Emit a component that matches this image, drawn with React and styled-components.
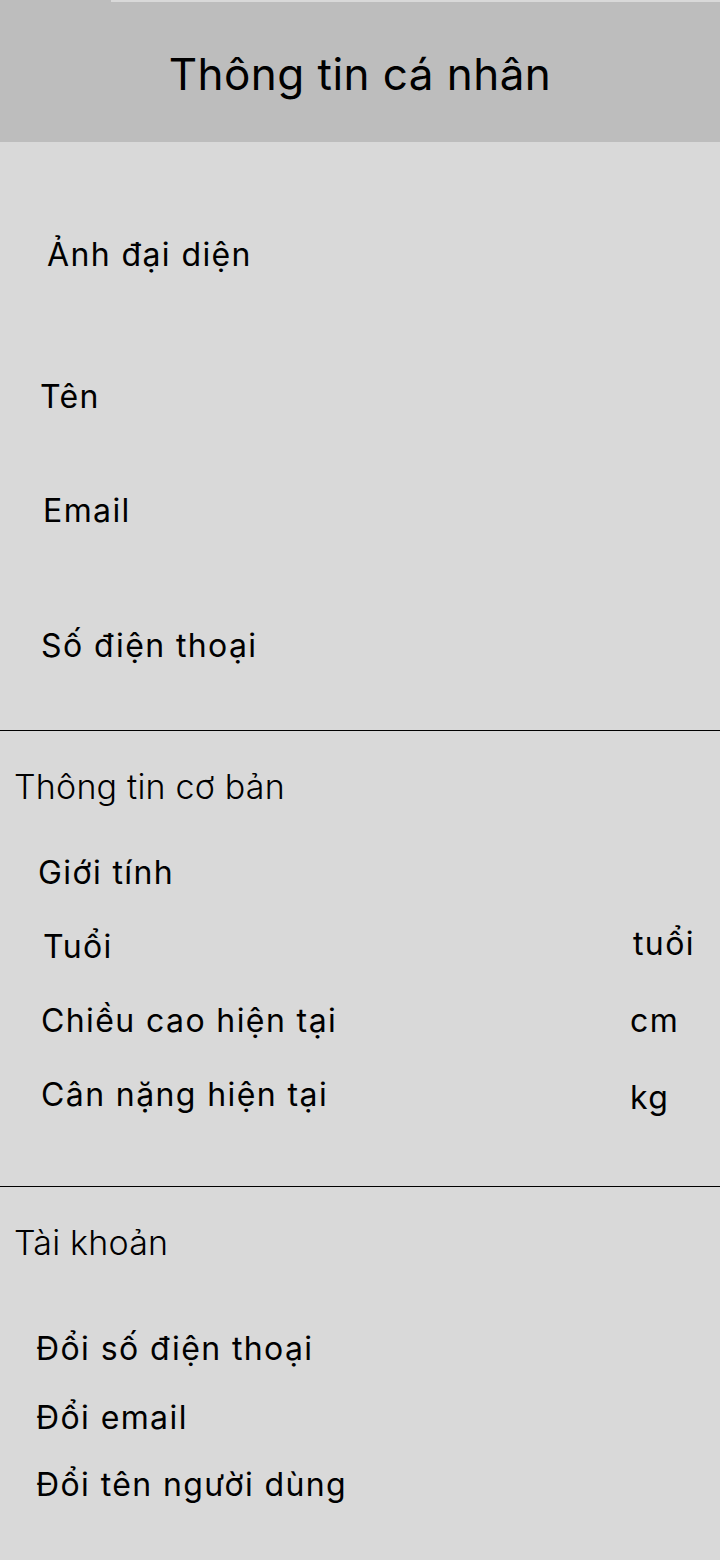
import React from 'react';
import styled, { createGlobalStyle } from 'styled-components';

const GlobalStyle = createGlobalStyle`
  html, body {
    margin: 0;
    padding: 0;
    background: #d9d9d9;
  }
  body {
    font-family: Inter, "Noto Sans", sans-serif;
    color: #000;
  }
`;

const basicInfo = [
  { label: 'Giới tính', indent: 38, top: 46 },
  { label: 'Tuổi', indent: 43, top: 34, unit: 'tuổi', unitShift: 3, unitDy: -3 },
  { label: 'Chiều cao hiện tại', indent: 41, top: 34, unit: 'cm' },
  { label: 'Cân nặng hiện tại', indent: 41, top: 34, unit: 'kg', unitDy: 3 }
];

const accountItems = [
  { label: 'Đổi số điện thoại', top: 66 },
  { label: 'Đổi email', top: 29 },
  { label: 'Đổi tên người dùng', top: 27 }
];

export default function App() {
  return (
    <Page>
      <GlobalStyle />
      <Header>
        <TopStrip />
        <Title>Thông tin cá nhân</Title>
      </Header>

      <Section $bottom={64}>
        <Row $indent={47} $top={93}>Ảnh đại diện</Row>
        <Row $indent={40} $top={102}>Tên</Row>
        <Row $indent={43} $top={74}>Email</Row>
        <Row $indent={41} $top={95}>Số điện thoại</Row>
      </Section>

      <Section $bordered $bottom={68}>
        <SectionTitle>Thông tin cơ bản</SectionTitle>
        {basicInfo.map(item => (
          <FieldRow key={item.label} $top={item.top}>
            <Label $indent={item.indent}>{item.label}</Label>
            {item.unit && (
              <Unit $shift={item.unitShift || 0} $dy={item.unitDy || 0}>
                {item.unit}
              </Unit>
            )}
          </FieldRow>
        ))}
      </Section>

      <Section $bordered $bottom={40}>
        <SectionTitle>Tài khoản</SectionTitle>
        {accountItems.map(item => (
          <Row key={item.label} $indent={36} $top={item.top}>
            {item.label}
          </Row>
        ))}
      </Section>
    </Page>
  );
}

const Page = styled.div`
  min-height: 1560px;
  background: #d9d9d9;
  display: flex;
  flex-direction: column;
`;

const Header = styled.header`
  height: 142px;
  background: #bdbdbd;
  display: flex;
  flex-direction: column;
`;

const TopStrip = styled.div`
  height: 2px;
  margin-left: 111px;
  background: #d9d9d9;
`;

const Title = styled.h1`
  margin: 46px 0 0;
  font-size: 44px;
  line-height: 53px;
  font-weight: 400;
  letter-spacing: 0.45px;
  text-align: center;
`;

const Section = styled.section`
  display: flex;
  flex-direction: column;
  border-top: ${p => (p.$bordered ? '1px solid #000' : 'none')};
  padding-bottom: ${p => p.$bottom}px;
`;

const SectionTitle = styled.h2`
  margin: 36px 0 0;
  padding-left: 14px;
  font-size: 34px;
  line-height: 40px;
  font-weight: 300;
  letter-spacing: 0.2px;
`;

const Row = styled.div`
  margin-top: ${p => p.$top}px;
  padding-left: ${p => p.$indent}px;
  font-size: 32px;
  line-height: 40px;
  letter-spacing: 1.4px;
`;

const FieldRow = styled.div`
  display: grid;
  grid-template-columns: 630px 1fr;
  align-items: start;
  margin-top: ${p => p.$top}px;
  font-size: 32px;
  line-height: 40px;
  letter-spacing: 1.4px;
`;

const Label = styled.span`
  padding-left: ${p => p.$indent}px;
`;

const Unit = styled.span`
  padding-left: ${p => p.$shift}px;
  margin-top: ${p => p.$dy}px;
`;
